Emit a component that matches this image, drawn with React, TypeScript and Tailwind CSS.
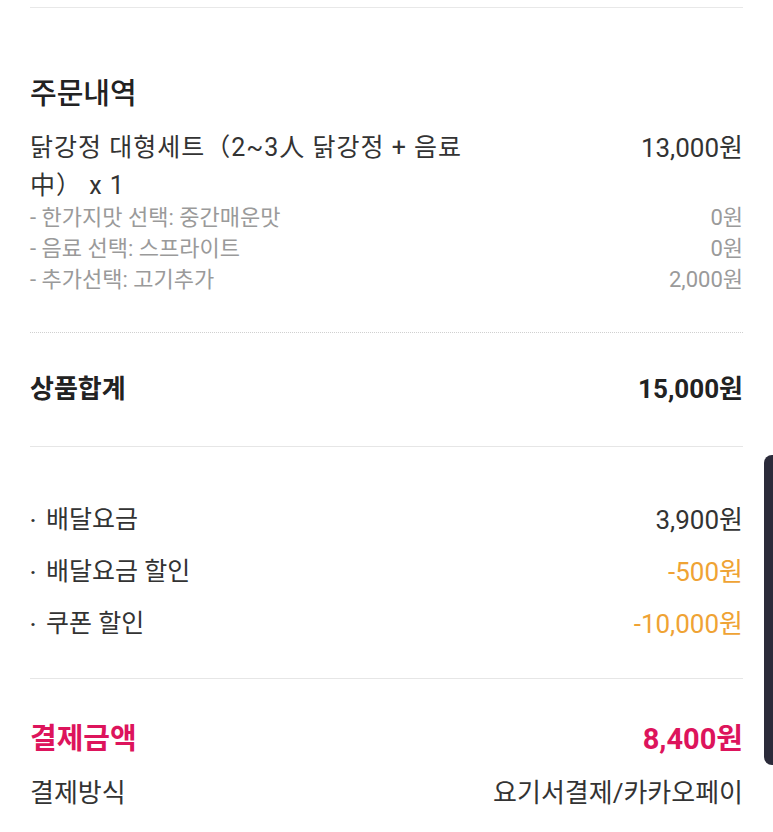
import React from "react";

const font = { fontFamily: "Roboto, 'Noto Sans CJK KR', 'Noto Sans', sans-serif" };

function Row({ label, value, valueClass = "text-[#333]" }: { label: string; value: string; valueClass?: string }) {
  return (
    <div className="flex items-center justify-between h-[52px] text-[25px] text-[#333]">
      <div className="flex items-center">
        <span className="w-[16px] text-[20px] font-bold">·</span>
        <span>{label}</span>
      </div>
      <span className={"text-[26px] " + valueClass}>{value}</span>
    </div>
  );
}

export default function App() {
  return (
    <div className="relative w-[773px] h-[832px] bg-white overflow-hidden" style={font}>
      <div className="px-[30px]">
        <div className="h-[7px]" />
        <div className="border-t border-[#e8e8e8]" />

        <div className="pt-[68px] text-[29px] font-medium leading-[36px] text-[#222]">주문내역</div>

        <div className="mt-[17px] flex justify-between text-[25px] leading-[38px] text-[#333]">
          <div className="tracking-[1px]">
            닭강정 대형세트（2~3人 닭강정 + 음료
            <br />
            中） x 1
          </div>
          <div className="text-[26px] tracking-normal">13,000원</div>
        </div>

        <div className="text-[22px] leading-[31px] text-[#9a9a9a] mt-[-3px]">
          <div className="flex justify-between"><span>- 한가지맛 선택: 중간매운맛</span><span>0원</span></div>
          <div className="flex justify-between"><span>- 음료 선택: 스프라이트</span><span>0원</span></div>
          <div className="flex justify-between"><span>- 추가선택: 고기추가</span><span>2,000원</span></div>
        </div>

        <div className="mt-[37px] border-t border-dotted border-[#d0d0d0]" />

        <div className="h-[113px] flex items-center justify-between font-bold text-[#222]">
          <span className="text-[26px]">상품합계</span>
          <span className="text-[26px]">15,000원</span>
        </div>

        <div className="border-t border-[#e6e6e6]" />

        <div className="pt-[47px]">
          <Row label="배달요금" value="3,900원" />
          <Row label="배달요금 할인" value="-500원" valueClass="text-[#efa334]" />
          <Row label="쿠폰 할인" value="-10,000원" valueClass="text-[#efa334]" />
        </div>

        <div className="mt-[28px] border-t border-[#e6e6e6]" />

        <div className="mt-[41px] flex items-center justify-between h-[40px] font-bold text-[#dd145c]">
          <span className="text-[29px]">결제금액</span>
          <span className="text-[29px]">8,400원</span>
        </div>

        <div className="mt-[13px] flex items-center justify-between h-[40px] text-[26px] text-[#333]">
          <span>결제방식</span>
          <span>요기서결제/카카오페이</span>
        </div>
      </div>

      <div className="absolute right-0 top-[455px] w-[9px] h-[310px] rounded-l-[8px] bg-[#2b2b3a]" />
    </div>
  );
}
